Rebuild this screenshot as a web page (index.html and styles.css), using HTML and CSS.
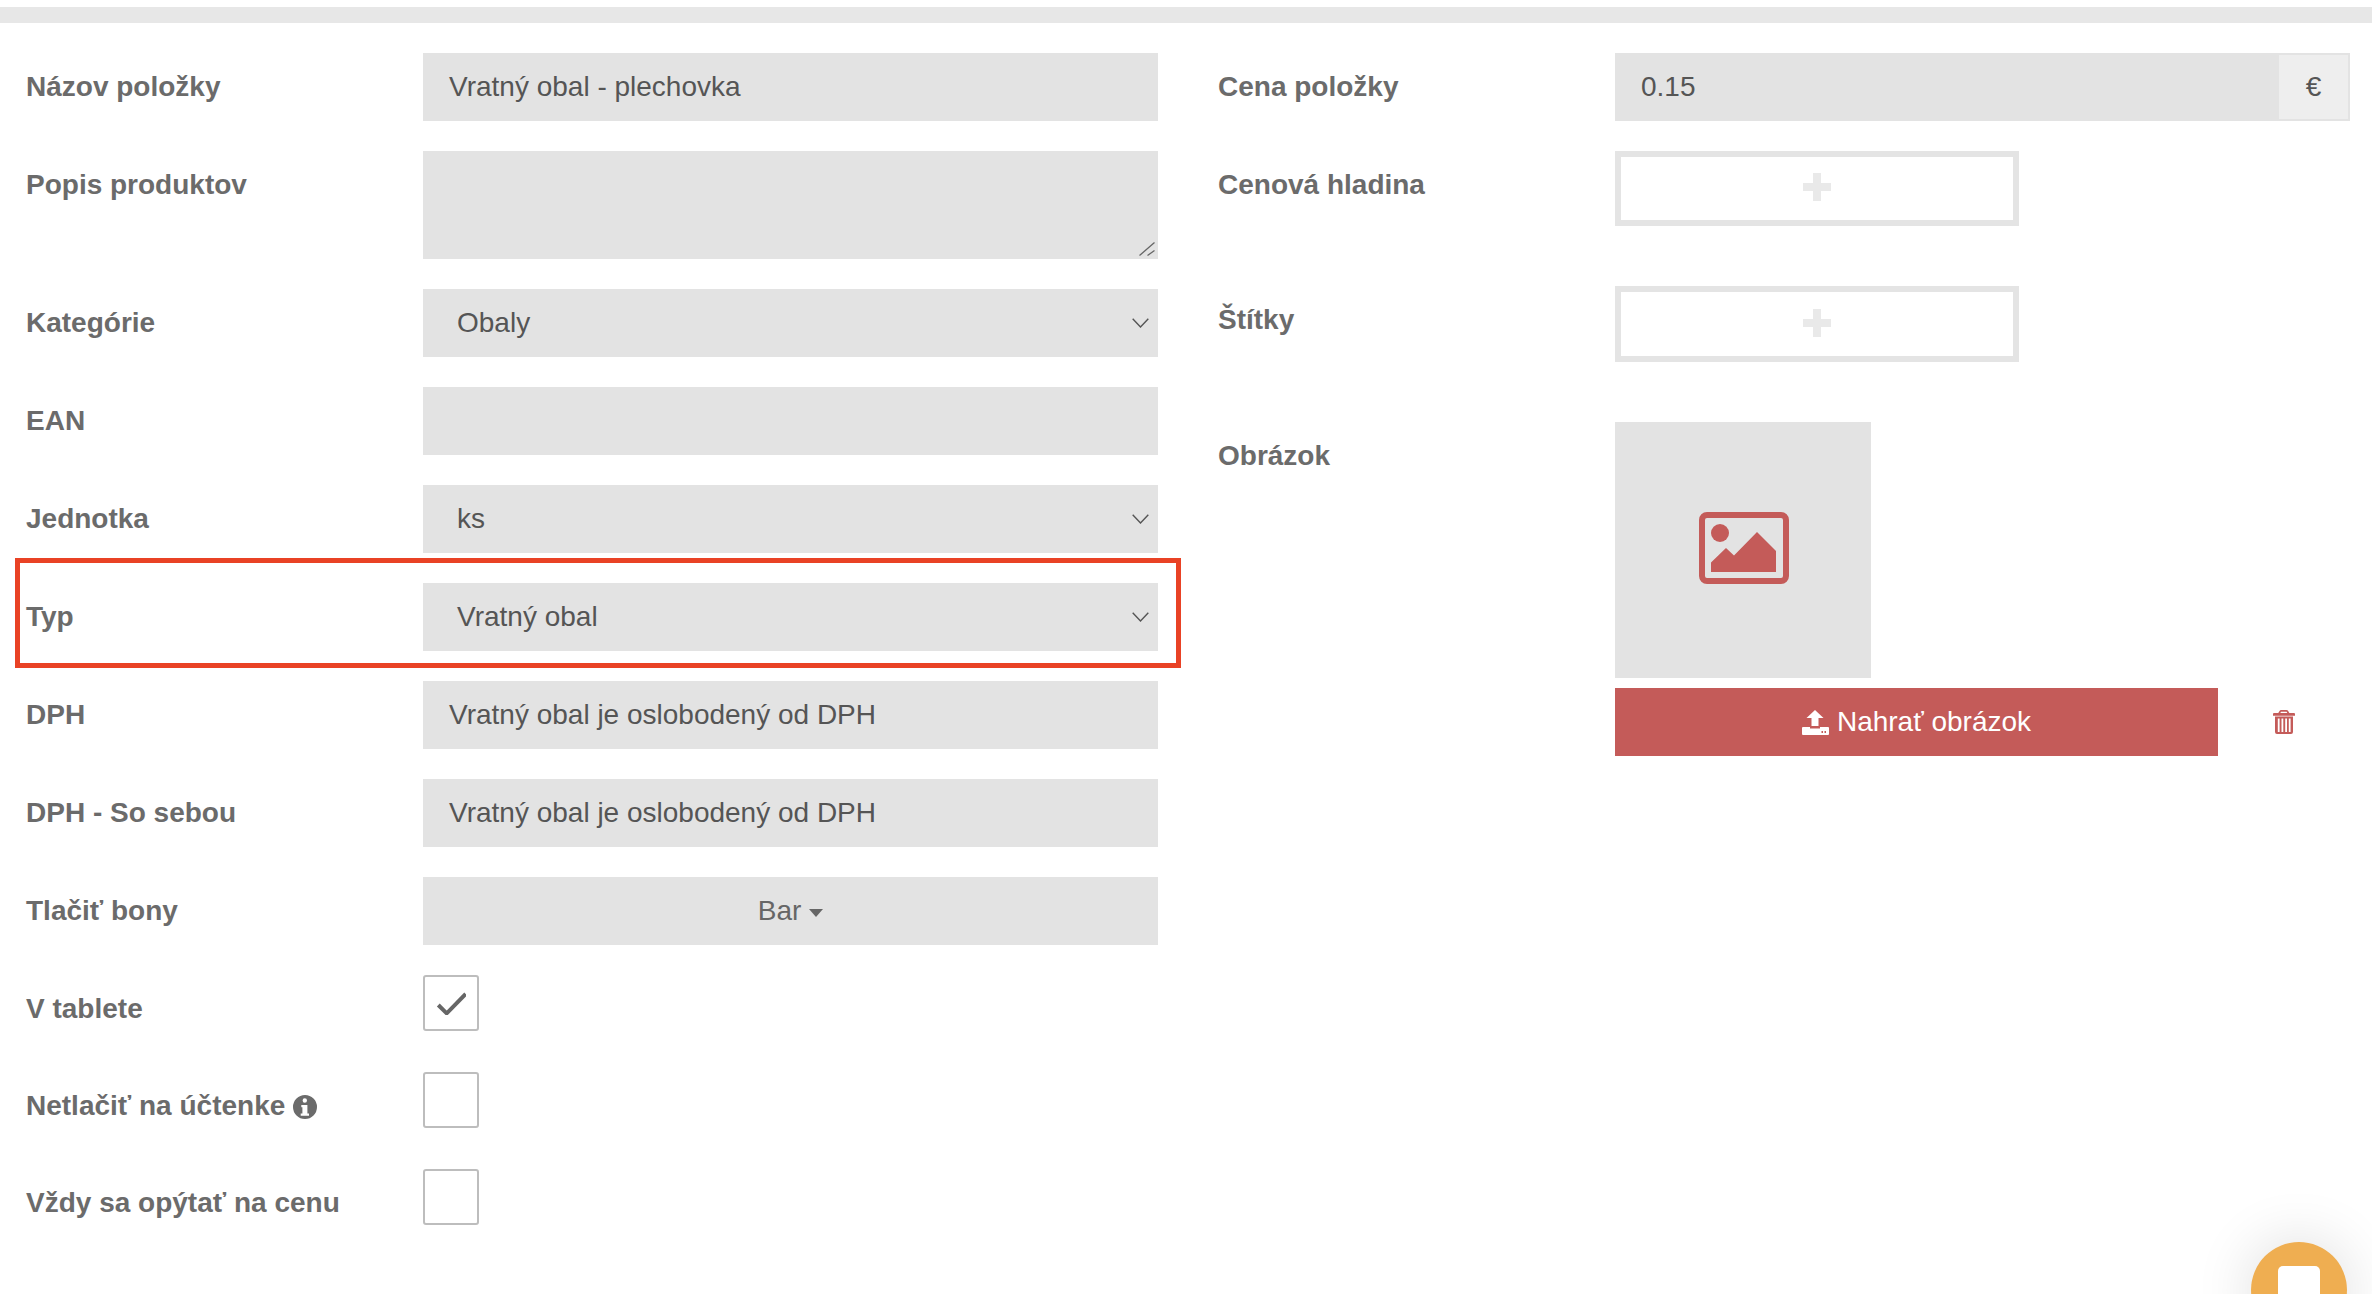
FILE: index.html
```html
<!DOCTYPE html>
<html lang="sk">
<head>
<meta charset="utf-8">
<title>Položka</title>
<link rel="stylesheet" href="styles.css">
</head>
<body>
<div class="topbar"></div>
<main class="form">
  <section class="col col-left">
    <div class="row"><div class="label">Názov položky</div><div class="field">Vratný obal - plechovka</div></div>
    <div class="row"><div class="label">Popis produktov</div><div class="area-wrap"><textarea class="area"></textarea><svg class="grip" viewBox="0 0 16 14"><path d="M.5 13.500 15.500.5M8.500 13.500 15.500 8.500"/></svg></div></div>
    <div class="row"><div class="label">Kategórie</div><div class="field select">Obaly<svg class="chev" viewBox="0 0 17 10"><path d="M.7.7 8.5 9 16.3.7"/></svg></div></div>
    <div class="row"><div class="label">EAN</div><div class="field"></div></div>
    <div class="row"><div class="label">Jednotka</div><div class="field select">ks<svg class="chev" viewBox="0 0 17 10"><path d="M.7.7 8.5 9 16.3.7"/></svg></div></div>
    <div class="row row-marked"><div class="label">Typ</div><div class="field select">Vratný obal<svg class="chev" viewBox="0 0 17 10"><path d="M.7.7 8.5 9 16.3.7"/></svg></div><div class="mark"></div></div>
    <div class="row"><div class="label">DPH</div><div class="field">Vratný obal je oslobodený od DPH</div></div>
    <div class="row"><div class="label">DPH - So sebou</div><div class="field">Vratný obal je oslobodený od DPH</div></div>
    <div class="row"><div class="label">Tlačiť bony</div><div class="field dropdown">Bar<span class="caret"></span></div></div>
    <div class="row row-check"><div class="label">V tablete</div><div class="check"><svg class="tick" viewBox="0 0 30 24"><path d="M2.300 14 10.700 22.300 29.700 3"/></svg></div></div>
    <div class="row row-check"><div class="label">Netlačiť na účtenke <svg class="info" viewBox="0 0 24 24"><path fill-rule="evenodd" d="M12 0a12 12 0 1 0 0 24 12 12 0 0 0 0-24ZM11.800 3.300a2.200 2.200 0 1 1 0 4.400 2.200 2.200 0 0 1 0-4.400ZM8.300 10H14.400v8.400h1.600v2.300H7.700v-2.300h1.700V12.300H8.300Z"/></svg></div><div class="check"></div></div>
    <div class="row row-check"><div class="label">Vždy sa opýtať na cenu</div><div class="check"></div></div>
  </section>
  <section class="col col-right">
    <div class="row"><div class="label">Cena položky</div><div class="field price"><span>0.15</span><span class="addon">€</span></div></div>
    <div class="row row-box"><div class="label">Cenová hladina</div><div class="addbox"><span class="plus"></span></div></div>
    <div class="row row-box tall"><div class="label">Štítky</div><div class="addbox"><span class="plus"></span></div></div>
    <div class="row row-image">
      <div class="label">Obrázok</div>
      <div class="image-col">
        <div class="image">
          <svg class="picture" viewBox="0 0 90 72"><rect class="picture-frame" x="3" y="3" width="84" height="66" rx="5"/><circle cx="21" cy="21" r="9"/><path d="M12 60V50.500L27 36 35 43.500 58 20 77 39V60Z"/></svg>
        </div>
        <div class="upload-row">
          <div class="upload"><svg class="upload-icon" viewBox="0 0 27 25"><path fill-rule="evenodd" d="M13 0 21.500 8H16.500V16H9.500V8H4.500ZM1 17H8V18.500H18V17H26A1 1 0 0 1 27 18V24A1 1 0 0 1 26 25H1A1 1 0 0 1 0 24V18A1 1 0 0 1 1 17ZM19.500 21V23H21V21ZM22.500 21V23H24V21Z"/></svg>Nahrať obrázok</div>
          <svg class="trash" viewBox="0 0 22 24"><path fill-rule="evenodd" d="M5.300 3 6.500 1A2 2 0 0 1 8.200 0H13.500A2 2 0 0 1 15.200 1L16.300 3H21A1 1 0 0 1 22 4V5.700H0V4A1 1 0 0 1 1 3ZM7.300 3H14.300L13.600 1.700H8ZM2 6.500H20V22A2 2 0 0 1 18 24H4A2 2 0 0 1 2 22ZM4.800 8.500V22H6.600V8.500ZM8.500 8.500V22H10.300V8.500ZM12.200 8.500V22H14V8.500ZM15.800 8.500V22H17.600V8.500Z"/></svg>
        </div>
      </div>
    </div>
  </section>
</main>
<div class="chat"><span class="chat-square"></span></div>
</body>
</html>
```
FILE: styles.css
```css
* { box-sizing: border-box; }
html, body { margin: 0; height: 100%; overflow: hidden; background: #fff; }
body { font-family: "Liberation Sans", Arial, sans-serif; color: #555; }
.topbar { height: 16px; margin-top: 7px; background: #e7e7e7; }
.form { display: flex; padding: 30px 22px 0 26px; }
.col { width: 1192px; }
.col-left { padding-right: 60px; }
.col-right { width: 1132px; }
.row { display: flex; align-items: flex-start; margin-bottom: 30px; position: relative; }
.label { flex: 0 0 397px; font-size: 28px; font-weight: 700; line-height: 68px; color: #6b6b6b; white-space: nowrap; }
.field { flex: 1; height: 68px; line-height: 68px; padding-left: 26px; background: #e3e3e3; font-size: 28px; white-space: nowrap; position: relative; }
.area-wrap { flex: 1; position: relative; height: 108px; }
.area { display: block; width: 100%; height: 108px; margin: 0; padding: 0; border: 0; border-radius: 0; background: #e3e3e3; outline: 0; resize: none; }
.grip { position: absolute; right: 3px; bottom: 3px; width: 16px; height: 14px; fill: none; stroke: #666; stroke-width: 1.300; }
.select { padding-left: 34px; }
.chev { position: absolute; right: 9px; top: 29px; width: 17px; height: 10px; fill: none; stroke: #555; stroke-width: 1.400; }
.dropdown { padding-left: 0; text-align: center; color: #666; }
.caret { display: inline-block; margin-left: 8px; vertical-align: middle; border-top: 8px solid #666; border-left: 7.500px solid transparent; border-right: 7.500px solid transparent; }
.mark { position: absolute; left: -11px; top: -25px; width: 1166px; height: 110px; border: 5px solid #e94225; }
.row-check { margin-bottom: 29px; }
.check { width: 56px; height: 56px; border: 2px solid #bdbdbd; border-radius: 3px; display: flex; align-items: center; justify-content: center; background: #fff; }
.tick { flex: none; width: 30px; height: 24px; fill: none; stroke: #666; stroke-width: 4; }
.info { width: 24px; height: 24px; fill: #6b6b6b; vertical-align: -4px; }
.price { display: flex; justify-content: space-between; padding-right: 2px; align-items: stretch; }
.addon { width: 69px; margin: 2px 0; background: #eee; text-align: center; line-height: 64px; }
.row-box .addbox { width: 404px; height: 75px; border: 6px solid #e4e4e4; display: flex; align-items: center; justify-content: center; }
.row-box { margin-bottom: 60px; }
.row-box.tall .addbox { height: 76px; }
.plus { display: block; width: 28px; height: 28px; margin-bottom: 3px; border-radius: 2px; background: linear-gradient(#e9e9e9, #e9e9e9) center / 8px 100% no-repeat, linear-gradient(#e9e9e9, #e9e9e9) center / 100% 8px no-repeat; }
.image-col { flex: 1; }
.image { width: 256px; height: 256px; background: #e3e3e3; display: flex; align-items: center; justify-content: center; }
.picture { width: 90px; height: 72px; fill: #c45b59; margin-top: -4px; margin-left: 2px; }
.picture-frame { fill: none; stroke: #c45b59; stroke-width: 6; }
.upload-row { display: flex; align-items: center; margin-top: 10px; }
.upload { width: 603px; height: 68px; background: #c45b59; color: #fff; font-size: 28px; display: flex; align-items: center; justify-content: center; }
.upload-icon { width: 27px; height: 25px; fill: #fff; margin-right: 8px; }
.trash { width: 22px; height: 24px; margin-left: 55px; fill: #c45b59; }
.chat { position: fixed; left: 2251px; top: 1242px; width: 96px; height: 96px; border-radius: 50%; background: #efae51; box-shadow: 0 0 60px rgba(0,0,0,.14); display: flex; justify-content: center; }
.chat-square { width: 42px; height: 42px; margin-top: 24px; border-radius: 5px; background: #fff; }
```
